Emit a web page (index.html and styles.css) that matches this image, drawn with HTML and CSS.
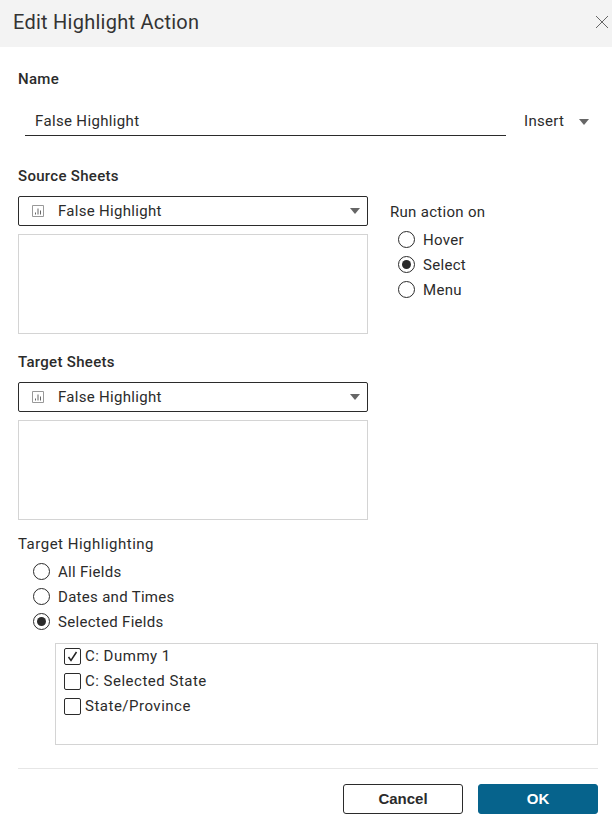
FILE: index.html
```html
<!DOCTYPE html>
<html lang="en">
<head>
<meta charset="utf-8">
<title>Edit Highlight Action</title>
<link rel="stylesheet" href="styles.css">
</head>
<body>
<div class="dialog">
  <header class="header">
    <h1 class="title">Edit Highlight Action</h1>
    <svg class="close" width="14" height="14" viewBox="0 0 14 14"><path d="M1 1L13 13M13 1L1 13" stroke="#666" stroke-width="1" fill="none"/></svg>
  </header>
  <main class="body">
    <div class="label name-label">Name</div>
    <div class="name-row">
      <div class="name-input">False Highlight</div>
      <div class="insert"><span>Insert</span><span class="caret"></span></div>
    </div>
    <div class="sheets-row">
      <div class="sheets-col">
        <div class="label src-label">Source Sheets</div>
        <div class="select">
          <svg class="chart" width="14" height="14" viewBox="0 0 14 14"><path d="M1.5 1.5h11v11h-11z" fill="none" stroke="#999"/><path d="M4.500 10.500v-2M7 10.500v-6M9.500 10.500v-4" stroke="#666" fill="none"/></svg>
          <span class="select-text">False Highlight</span><span class="caret"></span>
        </div>
        <div class="listbox"></div>
      </div>
      <div class="run">
        <div class="run-title">Run action on</div>
        <div class="radios">
          <div class="radio-row"><span class="radio"></span>Hover</div>
          <div class="radio-row"><span class="radio on"></span>Select</div>
          <div class="radio-row"><span class="radio"></span>Menu</div>
        </div>
      </div>
    </div>
    <div class="sheets-col">
      <div class="label tgt-label">Target Sheets</div>
      <div class="select">
        <svg class="chart" width="14" height="14" viewBox="0 0 14 14"><path d="M1.5 1.500h11v11h-11z" fill="none" stroke="#999"/><path d="M4.500 10.500v-2M7 10.500v-6M9.500 10.500v-4" stroke="#666" fill="none"/></svg>
        <span class="select-text">False Highlight</span><span class="caret"></span>
      </div>
      <div class="listbox"></div>
    </div>
    <div class="highlight-title">Target Highlighting</div>
    <div class="radios highlight-radios">
      <div class="radio-row"><span class="radio"></span>All Fields</div>
      <div class="radio-row"><span class="radio"></span>Dates and Times</div>
      <div class="radio-row"><span class="radio on"></span>Selected Fields</div>
    </div>
    <div class="fields">
      <div class="check-row"><span class="check"><svg width="15" height="15" viewBox="0 0 15 15"><path d="M3.500 8l2.500 3.500 5.500-8.500" fill="none" stroke="#222" stroke-width="1.500"/></svg></span><span class="check-text">C: Dummy 1</span></div>
      <div class="check-row"><span class="check"></span><span class="check-text">C: Selected State</span></div>
      <div class="check-row"><span class="check"></span><span class="check-text">State/Province</span></div>
    </div>
    <footer class="footer">
      <button class="btn cancel">Cancel</button>
      <button class="btn ok">OK</button>
    </footer>
  </main>
</div>
</body>
</html>
```
FILE: styles.css
```css
* { box-sizing: border-box; }
html, body { margin: 0; padding: 0; background: #fff; }
body { font-family: "Roboto", "Liberation Sans", sans-serif; font-size: 15px; color: #2b2b2b; width: 612px; height: 827px; overflow: hidden; }
.header { height: 47px; background: #f3f3f3; display: flex; align-items: center; justify-content: space-between; padding: 0 3px 3px 13px; }
.title { margin: 0; font-size: 20px; font-weight: 400; line-height: 24px; color: #333; letter-spacing: .25px; }
.close { display: block; }
.body { padding: 0 14px 0 18px; }
.label { font-weight: 500; line-height: 18px; letter-spacing: .3px; }
.name-label { margin-top: 23px; }
.name-row { display: flex; align-items: flex-start; margin-top: 19px; }
.name-input { margin-left: 7px; width: 481px; height: 29px; padding: 5px 10px 0; line-height: 18px; border-bottom: 1px solid #2b2b2b; letter-spacing: .35px; }
.insert { display: flex; align-items: center; margin-left: 18px; margin-top: 5px; line-height: 18px; letter-spacing: .3px; }
.insert .caret { margin-left: 15px; margin-top: 1px; }
.caret { width: 0; height: 0; border-left: 5px solid transparent; border-right: 5px solid transparent; border-top: 6px solid #666; }
.sheets-row { display: flex; align-items: flex-start; margin-top: 31px; }
.sheets-col { width: 350px; }
.src-label { margin-bottom: 11px; }
.tgt-label { margin-top: 19px; margin-bottom: 11px; }
.select { height: 30px; border: 1px solid #2b2b2b; border-radius: 2px; display: flex; align-items: center; padding: 0 7px 0 12px; }
.chart { flex: none; }
.select-text { margin-left: 13px; flex: 1; letter-spacing: .3px; }
.listbox { height: 100px; margin-top: 8px; border: 1px solid #d4d4d4; }
.run { margin-left: 22px; padding-top: 27px; }
.run-title { line-height: 18px; letter-spacing: .3px; margin-top: 9px; }
.radios { margin-top: 6px; margin-left: 8px; }
.radio-row { display: flex; align-items: center; height: 25px; letter-spacing: .3px; }
.radio { width: 17px; height: 17px; border: 1px solid #2b2b2b; border-radius: 50%; margin-right: 8px; flex: none; display: flex; align-items: center; justify-content: center; }
.radio.on::after { content: ""; width: 9px; height: 9px; border-radius: 50%; background: #2b2b2b; }
.highlight-title { margin-top: 15px; line-height: 18px; font-weight: 400; letter-spacing: .5px; }
.highlight-radios { margin-left: 15px; margin-top: 6px; }
.fields { margin: 9px 0 0 37px; width: 543px; height: 102px; border: 1px solid #d4d4d4; padding: 0 8px; }
.check-row { display: flex; align-items: center; height: 25px; letter-spacing: .5px; }
.check-text { padding-bottom: 2px; }
.check { width: 17px; height: 17px; border: 1px solid #2b2b2b; border-radius: 2px; margin-right: 4px; flex: none; display: flex; align-items: center; justify-content: center; }
.check svg { display: block; }
.footer { margin-top: 23px; border-top: 1px solid #e6e6e6; padding-top: 15px; display: flex; justify-content: flex-end; gap: 15px; }
.btn { width: 120px; height: 30px; border-radius: 3px; font-family: "Liberation Sans", sans-serif; font-size: 15px; font-weight: 700; padding: 0 0 1px; }
.cancel { background: #fff; border: 1px solid #2b2b2b; color: #2b2b2b; }
.ok { background: #06638c; border: 1px solid #06638c; color: #fff; }
```
